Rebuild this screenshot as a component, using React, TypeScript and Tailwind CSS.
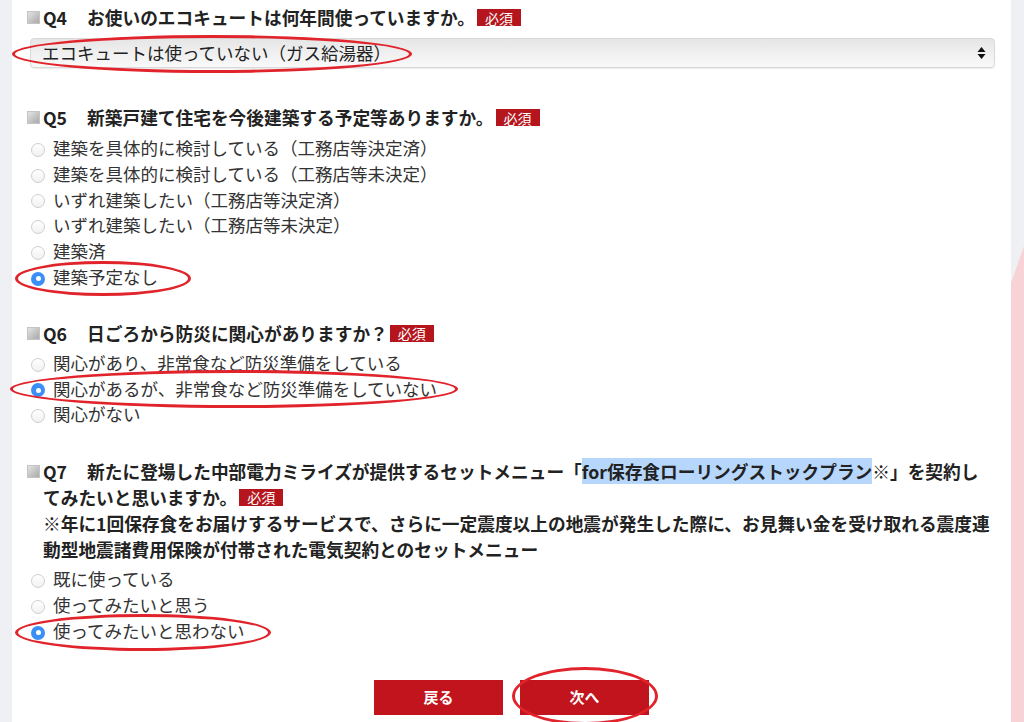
import React from "react";

function Badge() {
  return (
    <span className="ml-[2px] inline-flex h-[17px] items-center bg-[#b5161e] px-[8px] text-[14px] font-normal leading-none text-white">
      必須
    </span>
  );
}

function Square() {
  return (
    <span className="mr-[3px] mt-[7px] size-[13px] shrink-0 border border-[#c4c4c4] bg-gradient-to-br from-[#e4e4e4] to-[#a9a9a9]" />
  );
}

function Heading({ q, text }: { q: string; text: string }) {
  return (
    <div className="flex h-[26px] items-start text-[17.7px] font-bold leading-[26px] text-[#222]">
      <Square />
      <span>{q}</span>
      <span className="ml-[20px] whitespace-nowrap">{text}</span>
      <span className="mt-[5px] flex">
        <Badge />
      </span>
    </div>
  );
}

function Radio({ label, checked }: { label: string; checked?: boolean }) {
  return (
    <div className="flex h-[25.8px] items-center pl-[4px] text-[17.5px] leading-[25.8px] text-[#333]">
      {checked ? (
        <span className="mr-[8px] grid size-[14px] shrink-0 translate-y-[2px] place-items-center rounded-full bg-[#3b8ef5]">
          <span className="size-[5px] rounded-full bg-white" />
        </span>
      ) : (
        <span className="mr-[8px] size-[14px] shrink-0 translate-y-[2px] rounded-full border border-[#cfcfcf] bg-gradient-to-b from-white to-[#f1f1f1]" />
      )}
      <span className="whitespace-nowrap">{label}</span>
    </div>
  );
}

function Ring({ className }: { className: string }) {
  return <div className={`pointer-events-none absolute rounded-[50%] border-[3px] border-[#e1232b] ${className}`} />;
}

export default function App() {
  return (
    <div className="flex h-[722px] w-full overflow-hidden bg-[#eef0f3] font-['Noto_Sans_CJK_JP','Noto_Sans',sans-serif]">
      <div className="w-[12px] shrink-0" />

      <div className="relative flex-1 bg-white pl-[15px] pt-[4px]">
        {/* Q4 */}
        <Heading q="Q4" text="お使いのエコキュートは何年間使っていますか。" />
        <div className="ml-[3px] mr-[16px] mt-[8px] flex h-[30px] items-center justify-between rounded-[4px] border border-[#d9d9d9] bg-gradient-to-b from-[#e6e6e6] to-[#f9f9f9] pl-[11px] pr-[8px] text-[17.5px] text-[#222] shadow-[0_1px_1px_rgba(0,0,0,0.08)]">
          <span>エコキュートは使っていない（ガス給湯器）</span>
          <svg width="9" height="14" viewBox="0 0 9 14">
            <path d="M4.5 1 L8.5 6 L0.5 6 Z" fill="#111" />
            <path d="M4.5 13 L8.5 8 L0.5 8 Z" fill="#111" />
          </svg>
        </div>

        {/* Q5 */}
        <div className="mt-[36px]">
          <Heading q="Q5" text="新築戸建て住宅を今後建築する予定等ありますか。" />
          <div className="mt-[5px]">
            <Radio label="建築を具体的に検討している（工務店等決定済）" />
            <Radio label="建築を具体的に検討している（工務店等未決定）" />
            <Radio label="いずれ建築したい（工務店等決定済）" />
            <Radio label="いずれ建築したい（工務店等未決定）" />
            <Radio label="建築済" />
            <Radio label="建築予定なし" checked />
          </div>
        </div>

        {/* Q6 */}
        <div className="mt-[30px]">
          <Heading q="Q6" text="日ごろから防災に関心がありますか？" />
          <div className="mt-[4px]">
            <Radio label="関心があり、非常食など防災準備をしている" />
            <Radio label="関心があるが、非常食など防災準備をしていない" checked />
            <Radio label="関心がない" />
          </div>
        </div>

        {/* Q7 */}
        <div className="mt-[31px]">
          <div className="flex items-start text-[17.7px] font-bold leading-[26px] text-[#222]">
            <Square />
            <div>
              <div className="whitespace-nowrap">
                <span>Q7</span>
                <span className="ml-[20px]">
                  新たに登場した中部電力ミライズが提供するセットメニュー「
                  <span className="bg-[#b6d6fb]">for保存食ローリングストックプラン</span>
                  ※」を契約し
                </span>
              </div>
              <div className="flex items-center whitespace-nowrap">
                てみたいと思いますか。
                <Badge />
              </div>
              <div className="whitespace-nowrap">
                ※年に1回保存食をお届けするサービスで、さらに一定震度以上の地震が発生した際に、お見舞い金を受け取れる震度連
              </div>
              <div className="whitespace-nowrap">動型地震諸費用保険が付帯された電気契約とのセットメニュー</div>
            </div>
          </div>
          <div className="mt-[4px]">
            <Radio label="既に使っている" />
            <Radio label="使ってみたいと思う" />
            <Radio label="使ってみたいと思わない" checked />
          </div>
        </div>

        {/* buttons */}
        <div className="-ml-[15px] mt-[36px] flex justify-center gap-[17px]">
          <button className="h-[35px] w-[129px] bg-[#c2141d] text-[15px] font-bold text-white">戻る</button>
          <button className="h-[35px] w-[129px] bg-[#c2141d] text-[15px] font-bold text-white">次へ</button>
        </div>

        {/* annotation rings */}
        <Ring className="left-[0px] top-[35px] h-[38px] w-[400px]" />
        <Ring className="left-[3px] top-[261px] h-[35px] w-[176px]" />
        <Ring className="-left-[2px] top-[370px] h-[38px] w-[448px]" />
        <Ring className="left-[3px] top-[614px] h-[37px] w-[256px]" />
        <Ring className="left-[500px] top-[667px] h-[58px] w-[146px]" />
      </div>

      <div className="w-[13px] shrink-0">
        <svg width="13" height="722" viewBox="0 0 13 722">
          <polygon points="13,246 0,283 0,722 13,722" fill="#f7d3d7" />
        </svg>
      </div>
    </div>
  );
}
